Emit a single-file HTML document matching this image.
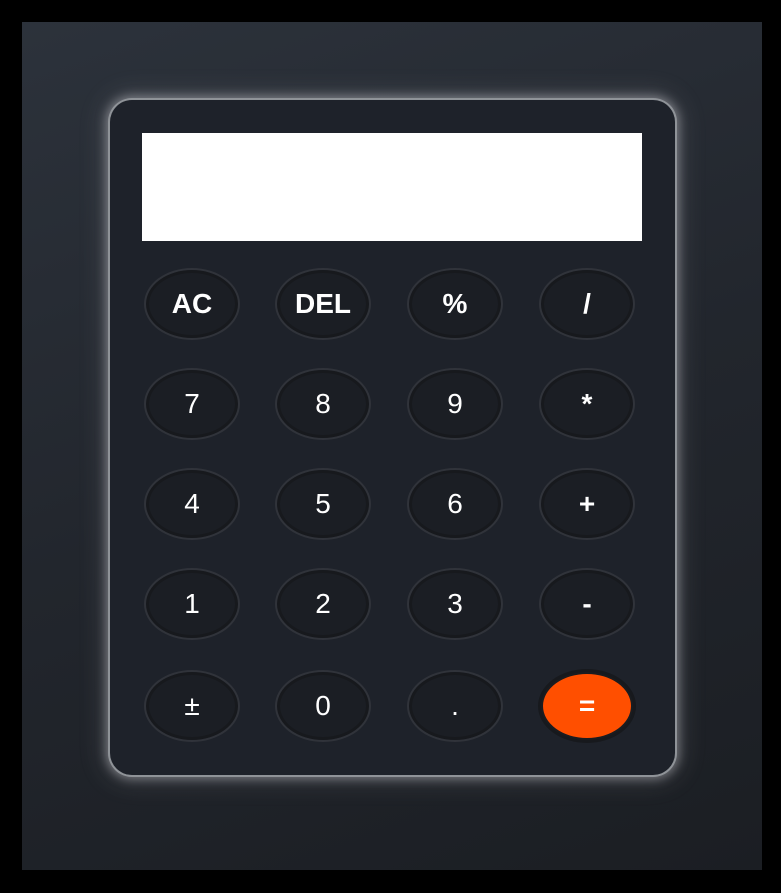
<!DOCTYPE html>
<html><head><style>
html,body{margin:0;width:781px;height:893px;background:#000;overflow:hidden}
.bg{position:absolute;left:22px;top:22px;width:740px;height:848px;background:linear-gradient(160deg,#2c323b 0%,#22262d 50%,#1b1e23 100%)}
.calc{position:absolute;left:110px;top:100px;width:565px;height:675px;border-radius:22px;background:#1e222a;box-shadow:0 0 0 2px #8f9398,0 0 10px 4px rgba(190,190,195,.5),0 0 24px 8px rgba(160,160,165,.2)}
.disp{position:absolute;left:32px;top:33px;width:500px;height:108px;background:#fff}
.b{position:absolute;width:92px;height:68px;border-radius:50%;background:#1b1e24;border:2px solid #30333a;box-shadow:inset 0 0 0 3px #17191d;color:#fff;font:28px "Liberation Sans",sans-serif;display:flex;align-items:center;justify-content:center;transform:translate(-48px,-35px)}
.o{font-weight:bold}
.eq{background:#ff4f00;box-shadow:0 0 0 3px #17191d;border-color:#1a1c20;font-weight:bold;width:88px;height:64px;transform:translate(-46px,-33px)}
</style></head><body>
<div class="bg"></div>
<div class="calc"><div class="disp"></div></div>
<div class="b o" style="left:192px;top:303px">AC</div>
<div class="b o" style="left:323px;top:303px">DEL</div>
<div class="b o" style="left:455px;top:303px">%</div>
<div class="b o" style="left:587px;top:303px">/</div>
<div class="b" style="left:192px;top:403px">7</div>
<div class="b" style="left:323px;top:403px">8</div>
<div class="b" style="left:455px;top:403px">9</div>
<div class="b o" style="left:587px;top:403px">*</div>
<div class="b" style="left:192px;top:503px">4</div>
<div class="b" style="left:323px;top:503px">5</div>
<div class="b" style="left:455px;top:503px">6</div>
<div class="b o" style="left:587px;top:503px">+</div>
<div class="b" style="left:192px;top:603px">1</div>
<div class="b" style="left:323px;top:603px">2</div>
<div class="b" style="left:455px;top:603px">3</div>
<div class="b o" style="left:587px;top:603px">-</div>
<div class="b" style="left:192px;top:705px">±</div>
<div class="b" style="left:323px;top:705px">0</div>
<div class="b" style="left:455px;top:705px">.</div>
<div class="b eq" style="left:587px;top:705px">=</div>
</body></html>
